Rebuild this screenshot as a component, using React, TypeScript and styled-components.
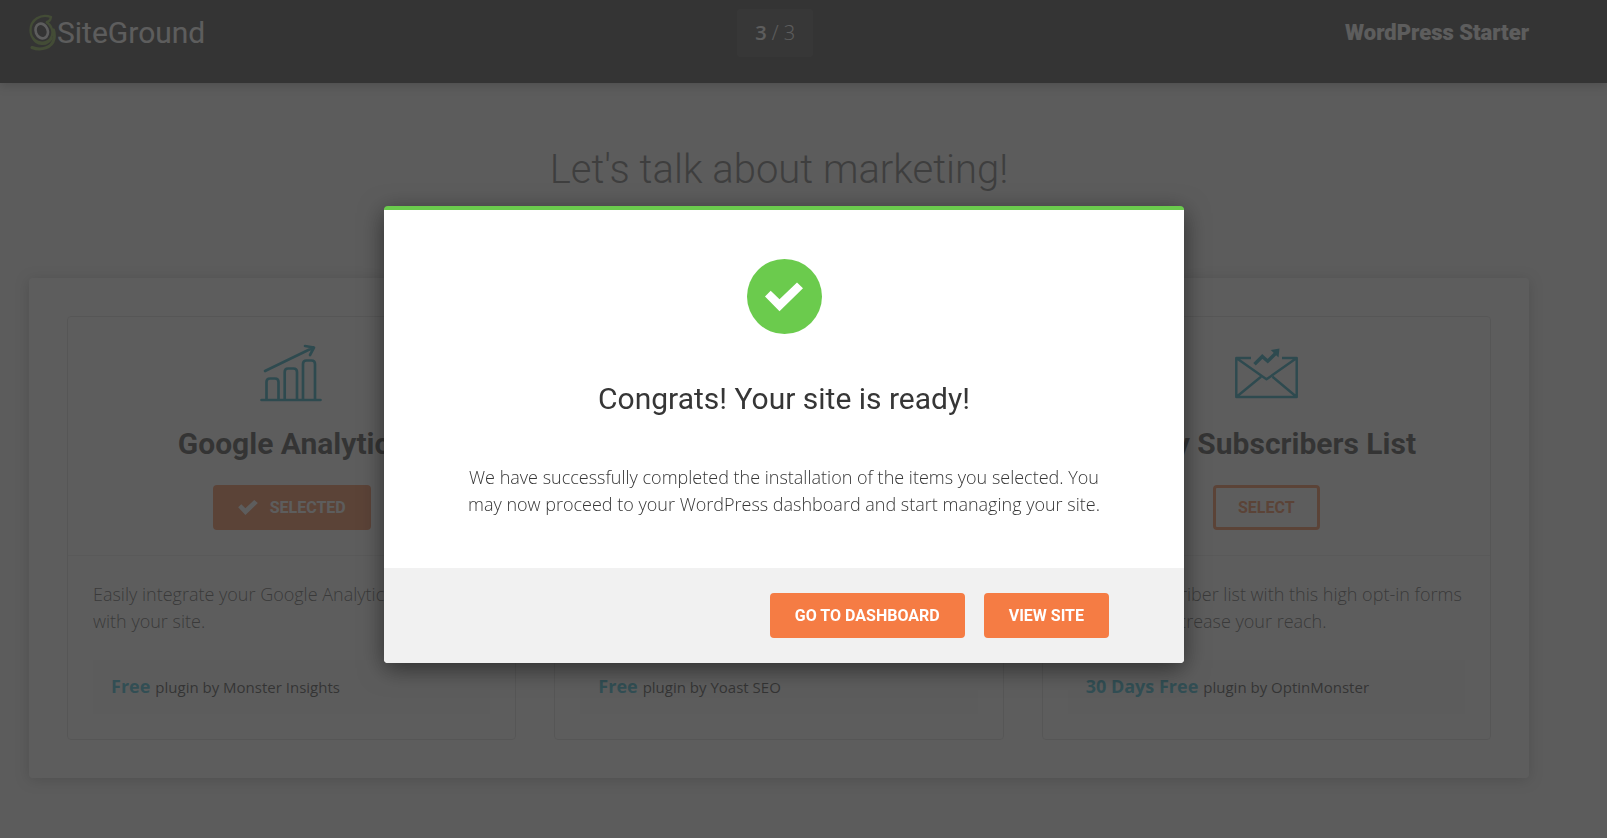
import React from "react";
import styled, { createGlobalStyle } from "styled-components";

const GlobalStyle = createGlobalStyle`
  * { box-sizing: border-box; }
  body {
    margin: 0;
    background: #f7f7f7;
    color: #363636;
    font-family: "Open Sans", sans-serif;
    font-size: 18px;
    line-height: 27px;
  }
  h1, h2, p { margin: 0; }
`;

const heading = `"Roboto", sans-serif`;

const Header = styled.header`
  background: #353535;
  box-shadow: 0 2px 10px rgba(0, 0, 0, 0.3);
  padding: 9px 78px 26px 29px;
  display: flex;
  justify-content: space-between;
  align-items: center;
  color: #fff;
`;

const Logo = styled.a`
  display: flex;
  align-items: center;
  gap: 1px;
  color: #fff;
  text-decoration: none;
  font-family: ${heading};
  font-size: 30px;
  line-height: 48px;
  svg { flex-shrink: 0; }
`;

const Steps = styled.div`
  background: rgba(255, 255, 255, 0.08);
  border-radius: 4px;
  padding: 0 18px;
  font-size: 20px;
  line-height: 48px;
  font-weight: 300;
  b { font-weight: 600; }
`;

const Product = styled.div`
  font-family: ${heading};
  font-weight: 900;
  font-size: 22px;
  line-height: 46px;
`;

const Main = styled.main`
  padding: 57px 78px 61px 29px;
`;

const PageTitle = styled.h1`
  font-family: ${heading};
  font-weight: 300;
  font-size: 40px;
  line-height: 60px;
  text-align: center;
  color: #666;
  margin-bottom: 78px;
`;

const Panel = styled.section`
  background: #fff;
  border-radius: 4px;
  box-shadow: 0 2px 14px rgba(0, 0, 0, 0.25);
  padding: 38px;
  display: grid;
  grid-template-columns: repeat(3, minmax(0, 1fr));
  gap: 38px;
`;

const Card = styled.article`
  border: 1px solid #ddd;
  border-radius: 4px;
  display: flex;
  flex-direction: column;
`;

const CardTop = styled.div`
  height: 239px;
  padding: 25px;
  border-bottom: 1px solid #ebebeb;
  display: flex;
  flex-direction: column;
  align-items: center;
`;

const CardTitle = styled.h2`
  font-family: ${heading};
  font-weight: 700;
  font-size: 30px;
  line-height: 38px;
  white-space: nowrap;
  margin: 19px 0 22px;
`;

const CardBody = styled.div`
  flex: 1;
  padding: 25px;
  display: flex;
  flex-direction: column;
  justify-content: space-between;
  gap: 25px;
`;

const CardText = styled.p`
  color: #505050;
  font-weight: 300;
`;

const Offer = styled.p`
  background: #fbfbfb;
  padding: 13px 18px;
  font-size: 15px;
  b {
    color: #28b5cf;
    font-weight: 700;
    font-size: 18px;
    margin-right: 5px;
  }
`;

const Button = styled.button<{ $outline?: boolean }>`
  height: 45px;
  padding: 0 22px;
  border: 3px solid #f57c44;
  border-radius: 4px;
  background: ${(p) => (p.$outline ? "#fff" : "#f57c44")};
  color: ${(p) => (p.$outline ? "#f57c44" : "#fff")};
  font-family: ${heading};
  font-weight: 700;
  font-size: 16px;
  line-height: 24px;
  display: flex;
  align-items: center;
  gap: 12px;
  cursor: pointer;
`;

const Overlay = styled.div`
  position: fixed;
  inset: 0;
  background: rgba(53, 53, 53, 0.8);
  padding: 206px 39px 20px 0;
  display: flex;
  justify-content: center;
  align-items: flex-start;
`;

const Dialog = styled.div`
  width: 800px;
  max-width: 100%;
  background: #fff;
  border-top: 4px solid #6bcb4d;
  border-radius: 4px;
  overflow: hidden;
  box-shadow: 0 6px 24px rgba(0, 0, 0, 0.5);
`;

const DialogBody = styled.div`
  padding: 49px 75px 50px;
  display: flex;
  flex-direction: column;
  align-items: center;
  text-align: center;
  font-weight: 300;
`;

const DialogTitle = styled.h2`
  font-family: ${heading};
  font-weight: 400;
  font-size: 30px;
  line-height: 40px;
  margin: 45px 0;
`;

const DialogFooter = styled.div`
  background: #f1f1f1;
  padding: 25px 75px;
  display: flex;
  justify-content: flex-end;
  gap: 19px;
`;

const Swirl = () => (
  <svg width="27" height="38" viewBox="0 0 27 38" fill="none" strokeLinecap="round" aria-hidden="true">
    <path d="M22 3C12 -1 1.500 6 1.500 16C1.500 25 8 29 14 28.500C22 28 25 20 22.500 14C21 10 19 9 17 8C20 8 21.500 6 22 3" stroke="#7fac3c" strokeWidth="2.200" />
    <path d="M3 33.500C12 37 23 34 25 25C25.500 22 25.500 19 24.500 16" stroke="#7fac3c" strokeWidth="3" />
    <path d="M4 24C7 31 18 33 23 24" stroke="#7fac3c" strokeWidth="2" />
    <ellipse cx="12.700" cy="17" rx="6" ry="7.500" transform="rotate(-22 12.700 17)" stroke="#fff" strokeWidth="2.600" />
  </svg>
);

const Tick = ({ width, height }: { width: number; height: number }) => (
  <svg width={width} height={height} viewBox="0 0 38 29" fill="currentColor" aria-hidden="true">
    <path d="M0 14L6 8L14 16L31 0L38 6L14 29Z" />
  </svg>
);

const SuccessIcon = () => (
  <svg width="75" height="75" viewBox="0 0 75 75" aria-hidden="true">
    <circle cx="37.500" cy="37.500" r="37.500" fill="#6bcb4d" />
    <path d="M18 37.500L23.700 31.700L32.500 40.300L50 23.500L56 29.300L32.500 52.300Z" fill="#fff" />
  </svg>
);

const ChartIcon = () => (
  <svg width="64" height="64" viewBox="0 0 64 64" fill="none" stroke="#18a0bb" strokeWidth="2.700" strokeLinecap="round" strokeLinejoin="round" aria-hidden="true">
    <path d="M1.500 58H60.500M6.500 57V40Q6.500 36.500 10 36.500H15Q18.500 36.500 18.500 40V57M24.700 57V30Q24.700 26.500 28 26.500H33.500Q37 26.500 37 30V57M43 57V22Q43 18.500 46.500 18.500H51.500Q55 18.500 55 22V57" />
    <path d="M5 29L53.500 5.500M45 4L54 5.500L50 13" />
  </svg>
);

const MailIcon = () => (
  <svg width="64" height="64" viewBox="0 0 64 64" fill="none" stroke="#18a0bb" strokeWidth="2.500" strokeLinejoin="round" aria-hidden="true">
    <path d="M17 16H2.300V55H62.700V16H48M2.300 16L32.500 37.300L62.700 16M2.300 55L27 34.700M62.700 55L38.500 34.700" />
    <path d="M20.500 22.300L28.300 14.500L33.700 19.200L42 11" strokeWidth="3.500" strokeLinejoin="miter" />
    <path d="M36.700 8L45.500 6.500L44.500 15.500Z" fill="#18a0bb" stroke="none" />
  </svg>
);

export default function App() {
  return (
    <>
      <GlobalStyle />
      <Header>
        <Logo href="#">
          <Swirl />
          <span>SiteGround</span>
        </Logo>
        <Steps><b>3</b> / 3</Steps>
        <Product>WordPress Starter</Product>
      </Header>
      <Main>
        <PageTitle>Let's talk about marketing!</PageTitle>
        <Panel>
          <Card>
            <CardTop>
              <ChartIcon />
              <CardTitle>Google Analytics</CardTitle>
              <Button><Tick width={20} height={15} />SELECTED</Button>
            </CardTop>
            <CardBody>
              <CardText>Easily integrate your Google Analytics account with your site.</CardText>
              <Offer><b>Free</b>plugin by Monster Insights</Offer>
            </CardBody>
          </Card>
          <Card>
            <CardTop />
            <CardBody>
              <CardText />
              <Offer><b>Free</b>plugin by Yoast SEO</Offer>
            </CardBody>
          </Card>
          <Card>
            <CardTop>
              <MailIcon />
              <CardTitle>Enjoy Subscribers List</CardTitle>
              <Button $outline>SELECT</Button>
            </CardTop>
            <CardBody>
              <CardText>Boost a subscriber list with this high opt-in forms and quickly increase your reach.</CardText>
              <Offer><b>30 Days Free</b>plugin by OptinMonster</Offer>
            </CardBody>
          </Card>
        </Panel>
      </Main>
      <Overlay>
        <Dialog role="dialog" aria-modal="true" aria-labelledby="dialog-title">
          <DialogBody>
            <SuccessIcon />
            <DialogTitle id="dialog-title">Congrats! Your site is ready!</DialogTitle>
            <p>
              We have successfully completed the installation of the items you selected. You
              may now proceed to your WordPress dashboard and start managing your site.
            </p>
          </DialogBody>
          <DialogFooter>
            <Button>GO TO DASHBOARD</Button>
            <Button>VIEW SITE</Button>
          </DialogFooter>
        </Dialog>
      </Overlay>
    </>
  );
}
